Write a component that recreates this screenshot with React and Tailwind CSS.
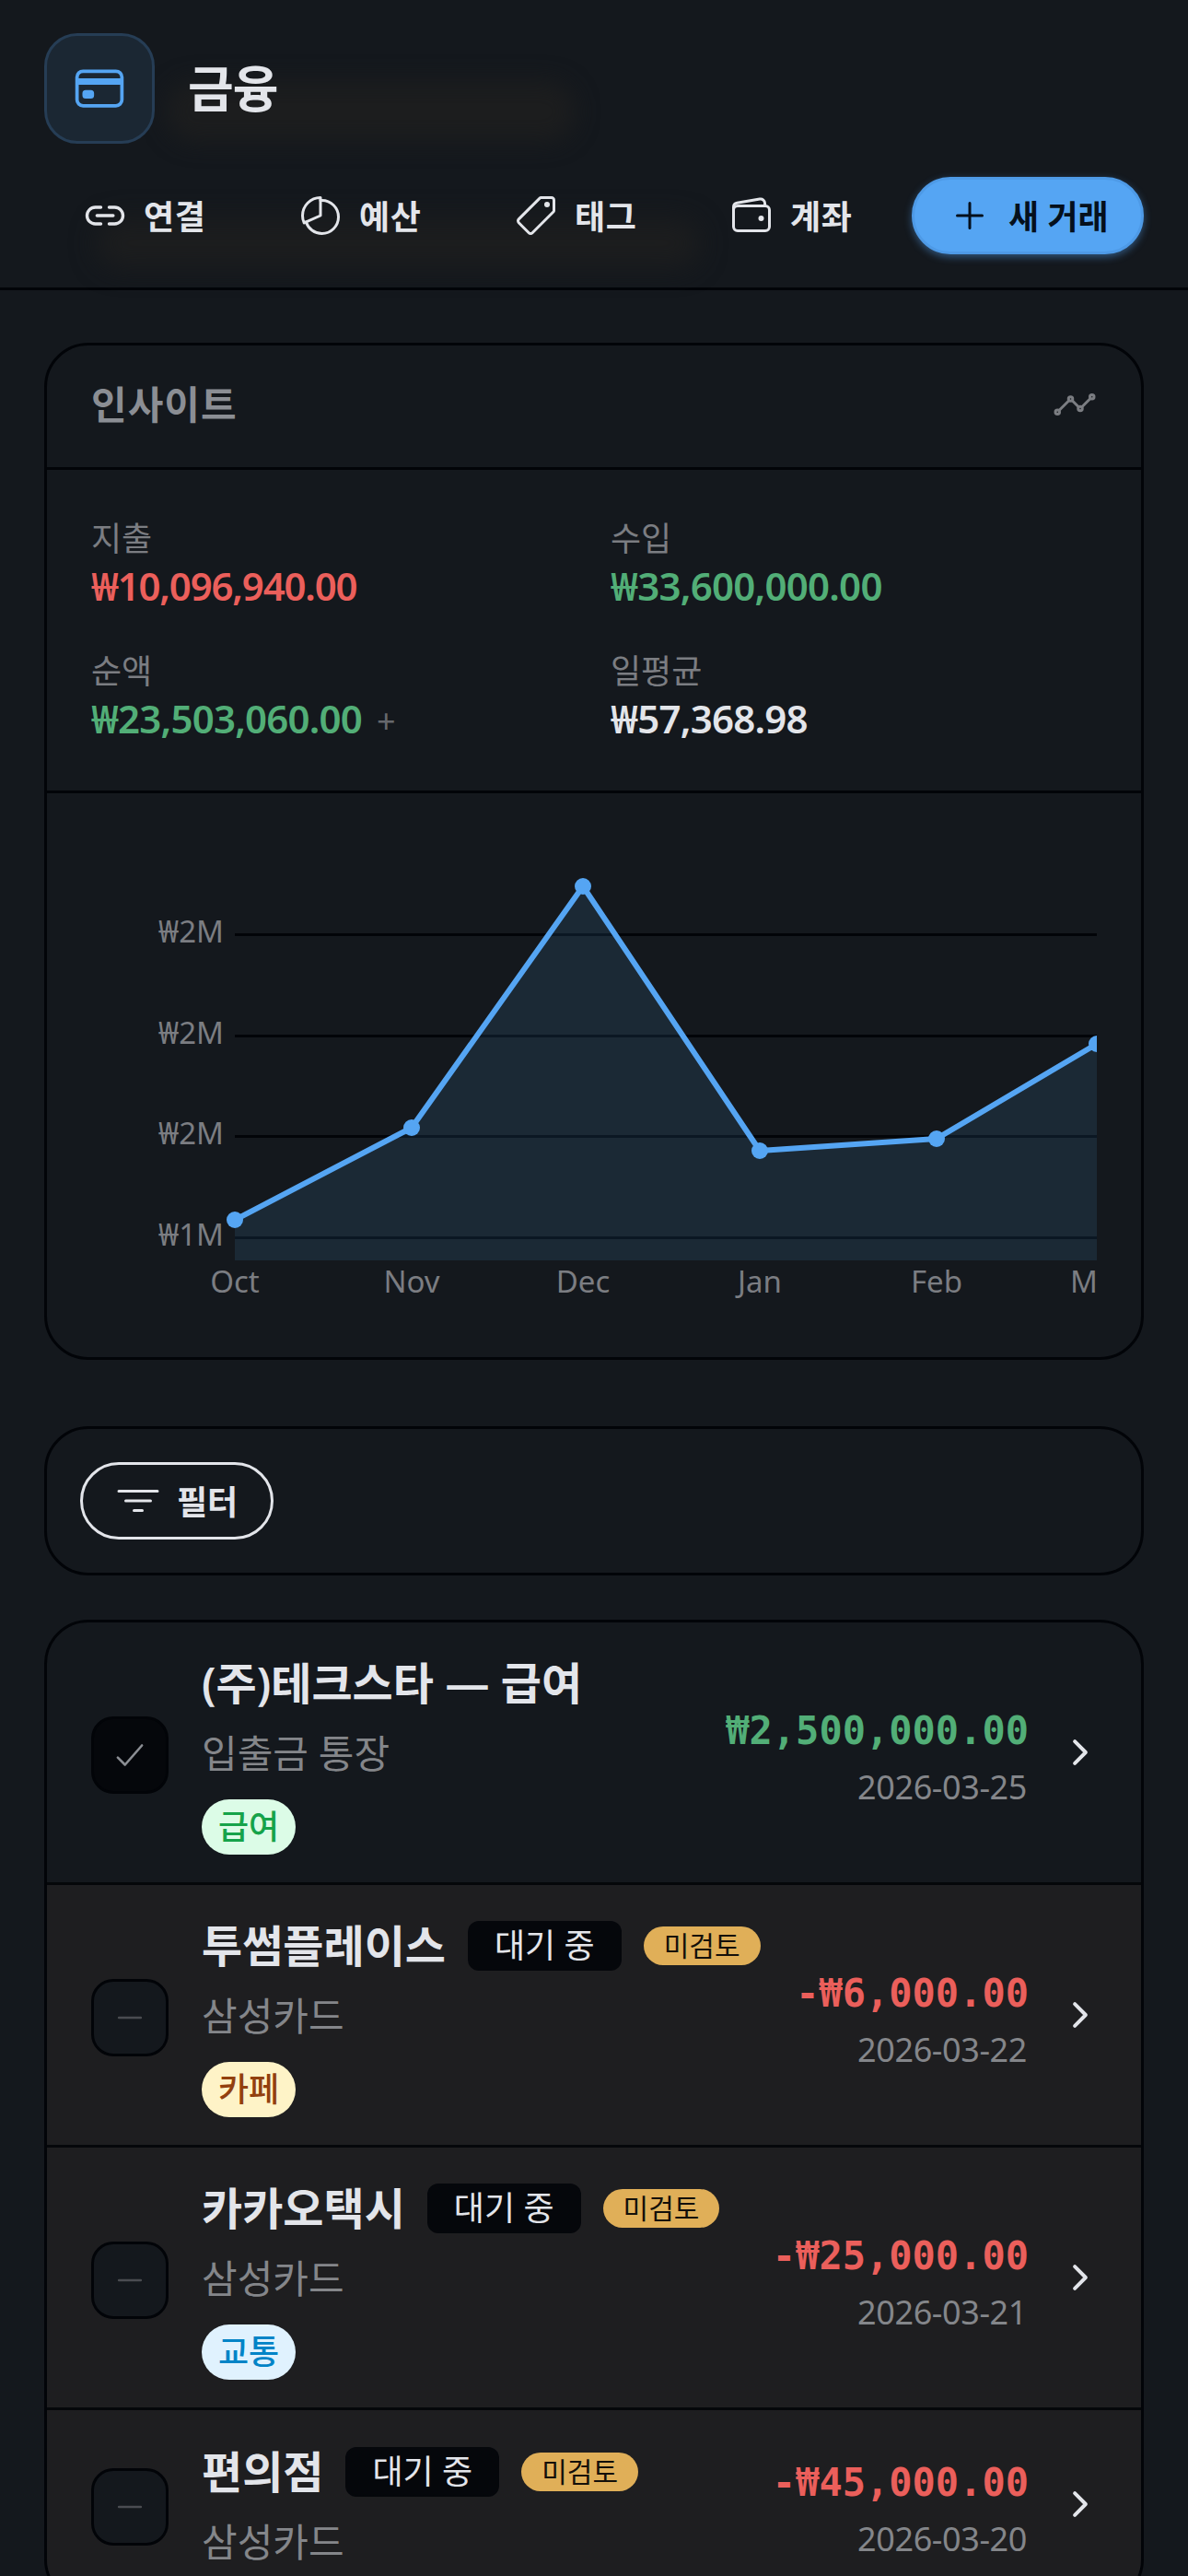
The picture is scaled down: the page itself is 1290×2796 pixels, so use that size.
import React from 'react';
import {
  IoAddOutline,
  IoAnalyticsOutline,
  IoCardOutline,
  IoCheckmarkOutline,
  IoChevronForward,
  IoFilterOutline,
  IoLinkOutline,
  IoPieChartOutline,
  IoPricetagOutline,
  IoRemoveOutline,
  IoWalletOutline,
} from 'react-icons/io5';

const navItems = [
  { label: '연결', icon: IoLinkOutline },
  { label: '예산', icon: IoPieChartOutline },
  { label: '태그', icon: IoPricetagOutline },
  { label: '계좌', icon: IoWalletOutline },
];

const stats = [
  { label: '지출', value: '₩10,096,940.00', color: 'text-[#eb5f5b] tracking-[-1.2px]' },
  { label: '수입', value: '₩33,600,000.00', color: 'text-[#52ae77] tracking-[-0.75px]' },
  { label: '순액', value: '₩23,503,060.00', color: 'text-[#52ae77] tracking-[-0.8px]', suffix: '+' },
  { label: '일평균', value: '₩57,368.98', color: 'text-[#e3e5ea] tracking-[-0.75px]' },
];

// chart coordinates, in svg units
const gridLines = [
  { y: 153.5, label: '₩2M' },
  { y: 263.5, label: '₩2M' },
  { y: 372.5, label: '₩2M' },
  { y: 482.5, label: '₩1M' },
];

const points = [
  { x: 156, y: 463, label: 'Oct' },
  { x: 348, y: 363, label: 'Nov' },
  { x: 534, y: 101, label: 'Dec' },
  { x: 726, y: 388, label: 'Jan' },
  { x: 918, y: 375, label: 'Feb' },
  { x: 1092, y: 272, label: 'Mar' },
];

const transactions = [
  {
    id: 1,
    name: '(주)테크스타 — 급여',
    account: '입출금 통장',
    tag: '급여',
    tagClass: 'bg-[#dcfce7] text-[#16a34a]',
    amount: '₩2,500,000.00',
    amountClass: 'text-[#52ae77]',
    date: '2026-03-25',
    reviewed: true,
  },
  {
    id: 2,
    name: '투썸플레이스',
    account: '삼성카드',
    tag: '카페',
    tagClass: 'bg-[#fef3c7] text-[#92400e]',
    amount: '-₩6,000.00',
    amountClass: 'text-[#eb5f5b]',
    date: '2026-03-22',
  },
  {
    id: 3,
    name: '카카오택시',
    account: '삼성카드',
    tag: '교통',
    tagClass: 'bg-[#e0f2fe] text-[#0284c7]',
    amount: '-₩25,000.00',
    amountClass: 'text-[#eb5f5b]',
    date: '2026-03-21',
  },
  {
    id: 4,
    name: '편의점',
    account: '삼성카드',
    amount: '-₩45,000.00',
    amountClass: 'text-[#eb5f5b]',
    date: '2026-03-20',
  },
];

function Header() {
  return (
    <header className="relative h-[315px] border-b-3 border-[#020408] px-12 pt-9">
      <div className="absolute left-[180px] top-[88px] h-[66px] w-[445px] rounded-full bg-[#1c1d1e] blur-[12px]" />
      <div className="absolute left-[105px] top-[238px] h-[52px] w-[655px] rounded-full bg-[#1c1d1e] blur-[14px]" />
      <div className="relative flex items-center gap-9">
        <div className="flex size-[120px] items-center justify-center rounded-[36px] border-3 border-[#263d55] bg-[#1b2733] text-[#55a5f3]">
          <IoCardOutline size={60} />
        </div>
        <h1 className="text-[54px] font-bold leading-none tracking-[-1px]">금융</h1>
      </div>
      <nav className="relative mt-9 flex gap-6 pl-[3px]">
        {navItems.map(({ label, icon: Icon }) => (
          <button key={label} className="flex h-[84px] w-[210px] items-center gap-[18px] pl-[39px]">
            <Icon size={48} />
            <span className="pt-[3px] text-[36px] font-bold leading-none tracking-[0.6px]">{label}</span>
          </button>
        ))}
        <button className="ml-auto flex h-[84px] w-[252px] items-center gap-[18px] rounded-full border-3 border-[#4e9ae6] bg-[#55a5f3] pl-9 text-[#05101c] shadow-[0_3px_9px_rgba(85,165,243,0.45)]">
          <IoAddOutline size={48} />
          <span className="whitespace-nowrap pt-[3px] text-[36px] font-bold leading-none">새 거래</span>
        </button>
      </nav>
    </header>
  );
}

function SpendingChart() {
  const line = points.map((p) => `${p.x},${p.y}`).join(' ');

  return (
    <svg className="block h-[612px] w-[1092px]" viewBox="0 0 1092 612">
      {gridLines.map((g) => (
        <g key={g.y}>
          <line x1="156" x2="1092" y1={g.y} y2={g.y} stroke="#020408" strokeWidth="3" />
          <text x="144" y={g.y + 8} textAnchor="end" fontSize="33" fill="#7b7d82">
            {g.label}
          </text>
        </g>
      ))}
      <polygon points={`156,507 ${line} 1092,507`} fill="#4fa8e8" fillOpacity="0.12" />
      <polyline points={line} fill="none" stroke="#55a5f3" strokeWidth="6" strokeLinejoin="round" />
      {points.map((p) => (
        <g key={p.label}>
          <circle cx={p.x} cy={p.y} r="9" fill="#55a5f3" />
          {p.label !== 'Mar' && (
            <text x={p.x} y="542" textAnchor="middle" fontSize="33" fill="#7b7d82">
              {p.label}
            </text>
          )}
        </g>
      ))}
      <text x="1093" y="542" textAnchor="end" fontSize="33" fill="#7b7d82">
        M
      </text>
    </svg>
  );
}

function Insights() {
  return (
    <section className="mt-[57px] h-[1104px] rounded-[48px] border-3 border-[#020408]">
      <div className="flex h-[132px] items-center justify-between px-12 pb-1">
        <h2 className="text-[42px] font-bold leading-none tracking-[1px] text-[#8b8e94]">인사이트</h2>
        <IoAnalyticsOutline size={48} className="text-[#7b7d82]" />
      </div>
      <div className="grid h-[354px] grid-cols-2 content-start gap-x-9 gap-y-[30px] border-y-3 border-[#020408] px-12 pt-[48px]">
        {stats.map((s) => (
          <div key={s.label} className="h-[114px]">
            <p className="text-[36px] leading-[54px] text-[#7b7d82]">{s.label}</p>
            <p className={`text-[42px] font-semibold leading-[48px] ${s.color}`}>
              {s.value}
              {s.suffix && (
                <span className="ml-4 text-[36px] font-normal text-[#66686d]">{s.suffix}</span>
              )}
            </p>
          </div>
        ))}
      </div>
      <div className="px-12">
        <SpendingChart />
      </div>
    </section>
  );
}

function TransactionRow({ tx }) {
  return (
    <li
      className={`flex items-center border-b-3 border-[#05070a] px-12 ${tx.tag ? 'h-[285px]' : 'h-[207px]'} ${
        tx.reviewed ? '' : 'bg-[#1e1e20]'
      }`}
    >
      <div
        className={`mt-1.5 flex size-[84px] shrink-0 items-center justify-center rounded-[24px] border-3 border-[#020408] ${
          tx.reviewed ? 'bg-[#05070b] text-[#8b8e94]' : 'bg-[#14181d] text-[#4a4c51]'
        }`}
      >
        {tx.reviewed ? <IoCheckmarkOutline size={42} /> : <IoRemoveOutline size={42} />}
      </div>
      <div className="ml-9 grow">
        <div className="flex h-[72px] items-center gap-6">
          <span className="whitespace-nowrap text-[48px] font-semibold leading-[72px]">{tx.name}</span>
          {!tx.reviewed && (
            <>
              <span className="h-[54px] whitespace-nowrap rounded-[12px] bg-[#05070b] px-[29px] text-[36px] leading-[54px]">
                대기 중
              </span>
              <span className="h-[42px] whitespace-nowrap rounded-full bg-[#e0af58] px-[22px] text-[30px] leading-[42px] text-[#14100a]">
                미검토
              </span>
            </>
          )}
        </div>
        <p className="mt-2 text-[42px] leading-[63px] text-[#84868a]">{tx.account}</p>
        {tx.tag && (
          <span
            className={`mt-[19px] flex h-[60px] w-[102px] items-center justify-center rounded-full text-[36px] font-medium leading-none ${tx.tagClass}`}
          >
            {tx.tag}
          </span>
        )}
      </div>
      <div className="shrink-0 pt-[9px] text-right">
        <p className={`font-['DejaVu_Sans_Mono'] text-[42px] font-bold leading-[66px] ${tx.amountClass}`}>
          {tx.amount}
        </p>
        <p className="pr-0.5 text-[36px] leading-[56px] tracking-[-0.4px] text-[#84868a]">{tx.date}</p>
      </div>
      <IoChevronForward size={42} className="-mr-[3px] ml-[35px] shrink-0" />
    </li>
  );
}

export default function App() {
  return (
    <div className="h-[2796px] w-[1290px] overflow-hidden bg-[#14181d] font-['Noto_Sans','Noto_Sans_CJK_KR',sans-serif] text-[#e3e5ea]">
      <Header />
      <main className="px-12">
        <Insights />
        <section className="mt-[72px] h-[162px] rounded-[48px] border-3 border-[#020408] p-9">
          <button className="flex h-[84px] w-[210px] items-center gap-[18px] rounded-full border-3 border-[#e3e5ea] pl-9">
            <IoFilterOutline size={48} />
            <span className="pt-[3px] text-[36px] font-bold leading-none">필터</span>
          </button>
        </section>
        <ul className="mt-12 overflow-hidden rounded-[48px] border-3 border-[#020408]">
          {transactions.map((tx) => (
            <TransactionRow key={tx.id} tx={tx} />
          ))}
        </ul>
      </main>
    </div>
  );
}
